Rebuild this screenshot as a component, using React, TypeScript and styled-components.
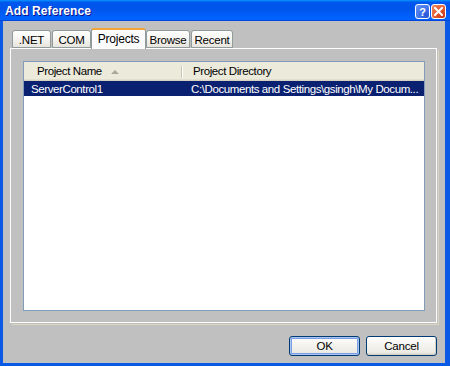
import React from 'react';
import styled, { createGlobalStyle } from 'styled-components';

const Global = createGlobalStyle`
  html, body { margin: 0; padding: 0; }
  body {
    width: 450px; height: 366px; overflow: hidden;
    background: #c0c0c0;
    font-family: "Liberation Sans", Arial, sans-serif;
    font-size: 11px;
    color: #000;
  }
  * { box-sizing: border-box; }
`;

const Window = styled.div`
  width: 450px;
  height: 366px;
  display: flex;
  flex-direction: column;
`;

const TitleBar = styled.div`
  height: 21px;
  flex: none;
  display: flex;
  align-items: center;
  justify-content: space-between;
  padding: 0 4px 0 5px;
  background: linear-gradient(180deg, #0997ff 0%, #0058ee 10%, #0054ea 40%, #0063ff 85%, #0063ff 92%, #005bff 95%, #0045dd 97%, #0045dd 100%);
`;

const Title = styled.span`
  color: #fff;
  font-weight: bold;
  font-size: 12px;
  letter-spacing: 0.1px;
  text-shadow: 1px 1px 0 #0f1089;
`;

const TitleButtons = styled.div`
  display: flex;
  gap: 1px;
  margin-top: 2px;
`;

const CaptionButton = styled.div<{ $kind: 'help' | 'close' }>`
  width: 15px;
  height: 15px;
  border: 1px solid #fff;
  border-radius: 3px;
  display: flex;
  align-items: center;
  justify-content: center;
  color: #fff;
  font-weight: bold;
  font-size: 11px;
  background: ${p =>
    p.$kind === 'help'
      ? 'radial-gradient(circle at 80% 80%, #2a56d6 0%, #3d6fe8 40%, #6a96f5 100%)'
      : 'radial-gradient(circle at 80% 80%, #c4391a 0%, #e15a2c 45%, #f09070 100%)'};
`;

const Frame = styled.div`
  flex: 1;
  display: flex;
  flex-direction: column;
  border-left: 3px solid #0b5ae6;
  border-right: 5px solid #0b5ae6;
  border-bottom: 3px solid #0b5ae6;
  background: #c0c0c0;
  padding: 7px 8px 7px 7px;
`;

const TabStrip = styled.div`
  height: 20px;
  flex: none;
  display: flex;
  align-items: flex-end;
  padding-left: 2px;
  position: relative;
  z-index: 1;
`;

const Tab = styled.div<{ $w: number; $active?: boolean }>`
  width: ${p => p.$w}px;
  height: ${p => (p.$active ? 21 : 18)}px;
  margin: ${p => (p.$active ? '0 0 -1px -1px' : '0 1px 0 0')};
  display: flex;
  align-items: center;
  justify-content: center;
  border: 1px solid #919b9c;
  border-bottom: ${p => (p.$active ? 'none' : '1px solid #919b9c')};
  border-top: ${p => (p.$active ? '2px solid #f0a536' : '1px solid #919b9c')};
  border-radius: 3px 3px 0 0;
  background: ${p =>
    p.$active ? '#fcfcfe' : 'linear-gradient(180deg, #ffffff 0%, #f6f5f1 50%, #e6e4dc 100%)'};
  padding-top: ${p => (p.$active ? '0' : '1px')};
  padding-bottom: ${p => (p.$active ? '2px' : '0')};
  font-size: ${p => (p.$active ? '12px' : '11.5px')};
  letter-spacing: -0.2px;
  white-space: nowrap;
`;

const Panel = styled.div`
  height: 275px;
  flex: none;
  border: 1px solid #fdfdfd;
  box-shadow: 1px 1px 0 #c0c0c0, 2px 2px 0 #dcd7c1;
  padding: 12px 11px 11px 12px;
  display: flex;
`;

const ListBox = styled.div`
  flex: 1;
  border: 1px solid #7f9db9;
  background: #fff;
  display: flex;
  flex-direction: column;
`;

const Header = styled.div`
  height: 19px;
  flex: none;
  display: flex;
  background: #ebeadb;
  box-shadow: inset 0 -1px 0 #d6d2c2, inset 0 -2px 0 #e2dfd0;
`;

const HeaderCell = styled.div<{ $w?: number; $pad: number }>`
  ${p => (p.$w ? `width: ${p.$w}px;` : 'flex: 1;')}
  flex-shrink: 0;
  display: flex;
  align-items: center;
  padding-left: ${p => p.$pad}px;
  padding-bottom: 1px;
  font-size: 11.5px;
  letter-spacing: -0.4px;
  white-space: nowrap;
`;

const Divider = styled.div`
  width: 2px;
  flex: none;
  margin: 4px 0 3px;
  border-left: 1px solid #c7c5b2;
  border-right: 1px solid #fff;
`;

const SortArrow = styled.span`
  display: inline-block;
  width: 0;
  height: 0;
  margin-left: 9px;
  margin-top: 1px;
  border-left: 4px solid transparent;
  border-right: 4px solid transparent;
  border-bottom: 4px solid #aca899;
`;

const Row = styled.div<{ $selected?: boolean }>`
  height: 15px;
  display: flex;
  align-items: center;
  background: ${p => (p.$selected ? '#0a2070' : 'transparent')};
  color: ${p => (p.$selected ? '#fff' : '#000')};
`;

const Cell = styled.div<{ $w?: number; $pad: number }>`
  ${p => (p.$w ? `width: ${p.$w}px;` : 'flex: 1;')}
  flex-shrink: 0;
  padding-left: ${p => p.$pad}px;
  font-size: 11.5px;
  letter-spacing: -0.4px;
  white-space: nowrap;
  overflow: hidden;
`;

const ButtonRow = styled.div`
  margin-top: 13px;
  display: flex;
  justify-content: flex-end;
  gap: 6px;
`;

const Button = styled.button<{ $default?: boolean }>`
  width: 71px;
  height: 20px;
  padding: 0;
  font-family: "Liberation Sans", Arial, sans-serif;
  font-size: 11.5px;
  letter-spacing: -0.2px;
  color: #000;
  border: 1px solid #003c74;
  border-radius: 3px;
  background: linear-gradient(180deg, #ffffff 0%, #f5f4ef 40%, #ecebe6 85%, #d6d0c5 100%);
  box-shadow: ${p =>
    p.$default
      ? 'inset 0 0 0 1px #a9c4ef, inset 0 0 0 2px #7b9ee6'
      : 'inset -1px -1px 0 #d6d0c5'};
`;

export default function App() {
  return (
    <>
      <Global />
      <Window>
        <TitleBar>
          <Title>Add Reference</Title>
          <TitleButtons>
            <CaptionButton $kind="help">?</CaptionButton>
            <CaptionButton $kind="close">
              <svg width="9" height="9" viewBox="0 0 9 9">
                <path d="M1 1 L8 8 M8 1 L1 8" stroke="#fff" strokeWidth="2" strokeLinecap="square" />
              </svg>
            </CaptionButton>
          </TitleButtons>
        </TitleBar>
        <Frame>
          <TabStrip>
            <Tab $w={39}>.NET</Tab>
            <Tab $w={39}>COM</Tab>
            <Tab $w={55} $active>Projects</Tab>
            <Tab $w={44}>Browse</Tab>
            <Tab $w={42}>Recent</Tab>
          </TabStrip>
          <Panel>
            <ListBox>
              <Header>
                <HeaderCell $w={157} $pad={13}>
                  Project Name
                  <SortArrow />
                </HeaderCell>
                <Divider />
                <HeaderCell $pad={10}>Project Directory</HeaderCell>
              </Header>
              <Row $selected>
                <Cell $w={159} $pad={7}>ServerControl1</Cell>
                <Cell $pad={8}>C:\Documents and Settings\gsingh\My Docum...</Cell>
              </Row>
            </ListBox>
          </Panel>
          <ButtonRow>
            <Button $default>OK</Button>
            <Button>Cancel</Button>
          </ButtonRow>
        </Frame>
      </Window>
    </>
  );
}
